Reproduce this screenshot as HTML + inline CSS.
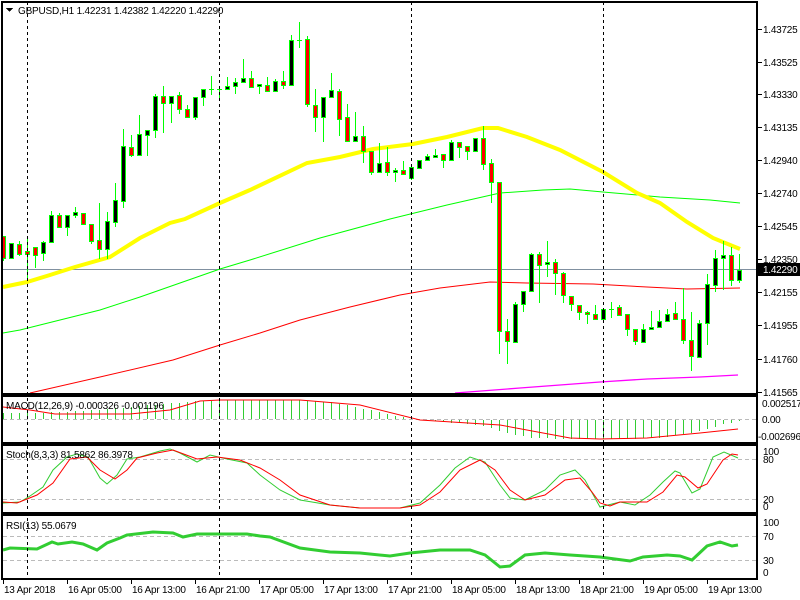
<!DOCTYPE html>
<html><head><meta charset="utf-8"><style>
html,body{margin:0;padding:0;background:#fff;}
svg{display:block;font-family:"Liberation Sans",sans-serif;font-size:10px;letter-spacing:-0.25px;}
.big{font-size:10px;letter-spacing:-0.2px;}
</style></head><body>
<svg id="s" width="800" height="600" xmlns="http://www.w3.org/2000/svg" shape-rendering="crispEdges">
<rect width="800" height="600" fill="#fff"/>
<g id="g"></g>
<text class="big" x="18" y="14" fill="#000">GBPUSD,H1  1.42231 1.42382 1.42220 1.42290</text>
<polygon points="6,8 13,8 9.5,12" fill="#000"/>
<text class="big" x="6" y="409" fill="#000">MACD(12,26,9) -0.000326 -0.001196</text>
<text class="big" x="6" y="458" fill="#000">Stoch(8,3,3) 81.5862 86.3978</text>
<text class="big" x="6" y="529" fill="#000">RSI(13) 55.0679</text>
</svg>
<script>
var g=document.getElementById('g'),h='';
function R(x,y,w,hh,c){h+='<rect x="'+x+'" y="'+y+'" width="'+w+'" height="'+hh+'" fill="'+c+'"/>';}
function L(pts,c,w,dash){h+='<polyline fill="none" stroke="'+c+'" stroke-width="'+w+'" '+(dash?'stroke-dasharray="'+dash+'" ':'')+'points="'+pts.map(function(p){return p.join(',')}).join(' ')+'" shape-rendering="auto"/>';}
function T(x,y,t,c){h+='<text x="'+x+'" y="'+y+'" fill="'+(c||'#000')+'">'+t+'</text>';}
L([[3,419.5],[757,419.5]],'#bbb',1,'4,3');
L([[3,459.5],[757,459.5]],'#bbb',1,'4,3');
L([[3,499.5],[757,499.5]],'#bbb',1,'4,3');
L([[3,536.5],[757,536.5]],'#bbb',1,'4,3');
L([[3,560.5],[757,560.5]],'#bbb',1,'4,3');
L([[3,269.5],[757,269.5]],'#8090a0',1);
L([[3,333],[20,330],[100,310],[140,297],[180,283],[220,269],[250,260],[320,238],[390,219],[447,205],[500,193],[543,190],[570,189],[603,192],[660,197],[710,200],[740,203]],'#00ff00',1);
L([[30,393],[100,377],[173,360],[220,345],[260,333],[300,320],[350,307],[400,295],[440,288],[490,282],[527,283],[593,284],[647,287],[687,289],[740,288]],'#ff0000',1);
L([[455,393],[520,388],[600,382],[647,379],[700,377],[738,375]],'#ff00ff',1.3);
L([[3,287],[27,282],[50,275],[75,267],[110,257],[140,238],[170,223],[185,219],[220,203],[250,190],[307,163],[340,157],[373,149],[413,144],[447,137],[483,128],[498,128],[527,137],[560,150],[603,172],[637,193],[660,203],[687,222],[713,238],[740,249]],'#ffff00',4);
var C=[[236,258,236,260],[258,243,243,258],[244,254,241,255],[251,254,237,277],[247,255,247,267],[253,242,241,260],[242,215,211,242],[215,227,213,227],[227,215,215,235],[215,212,207,217],[213,224,213,224],[224,241,224,243],[240,249,203,258],[249,221,212,258],[222,200,183,226],[201,146,129,207],[147,155,135,156],[155,134,115,155],[135,130,130,155],[130,96,94,137],[96,103,86,132],[103,96,96,122],[95,109,92,113],[109,117,105,117],[117,97,97,119],[97,89,89,105],[89,89,76,94],[89,89,89,100],[89,86,77,89],[86,82,78,93],[82,78,59,82],[78,87,71,87],[86,84,84,93],[85,91,77,91],[91,81,79,91],[81,85,71,88],[85,40,35,85],[40,40,22,47],[39,104,36,106],[105,117,89,131],[117,97,97,141],[97,90,73,97],[91,119,89,135],[117,141,104,141],[141,136,112,141],[136,151,126,162],[151,172,151,174],[172,163,143,172],[162,172,147,175],[172,170,168,181],[170,174,161,174],[178,167,167,179],[168,160,160,168],[160,156,154,160],[157,155,149,157],[154,160,154,167],[160,142,140,160],[142,147,142,157],[146,151,146,159],[151,138,138,151],[138,164,126,169],[163,182,159,202],[182,331,182,353],[331,341,319,363],[342,304,302,342],[304,291,291,311],[291,254,253,291],[254,265,252,302],[264,262,241,276],[262,273,259,294],[273,295,272,302],[296,304,296,310],[305,312,305,319],[312,314,311,323],[314,319,305,319],[319,309,309,319],[309,309,302,317],[307,315,305,315],[314,329,314,335],[329,341,329,344],[342,329,324,342],[329,327,311,329],[327,321,310,327],[321,314,309,321],[313,319,302,319],[319,340,288,343],[340,356,312,370],[357,323,320,357],[323,284,274,344],[285,258,250,291],[258,255,241,289],[255,280,247,285],[280,270,254,282]];
for(var i=0;i<C.length;i++){var c=C[i],x=3+8*i,o=c[0],cl=c[1],hi=c[2],lo=c[3];
 var t=Math.min(o,cl),b=Math.max(o,cl);
 R(x,hi,1,lo-hi+1,'#00ff00');
 if(b-t<2){R(x-2,t,5,Math.max(1,b-t+1),'#00ff00');}
 else{R(x-2,t,5,b-t+1,'#00ff00');R(x-1,t+1,3,b-t-1,cl<o?'#000':'#ff0000');}
}
var MP=[[3,413],[40,413],[80,411],[120,408],[160,404],[200,401],[230,400],[290,400],[330,402],[370,410],[400,417],[430,420],[480,424],[500,430],[530,437],[580,438],[620,438],[660,437],[700,430],[720,424],[740,420]];
function interp(P,x){for(var k=0;k<P.length-1;k++){if(x>=P[k][0]&&x<=P[k+1][0]){var f=(x-P[k][0])/(P[k+1][0]-P[k][0]);return P[k][1]+f*(P[k+1][1]-P[k][1]);}}return P[P.length-1][1];}
for(var i=0;i<93;i++){var x=3+8*i,y=Math.round(interp(MP,x));if(y<419)R(x,y,1,419-y,'#32cd32');else R(x,420,1,y-419,'#32cd32');}
L([[3,407],[30,410],[55,414],[130,414],[170,410],[200,401],[220,400],[300,400],[360,405],[420,420],[500,425],[570,438],[600,439],[647,438],[700,433],[738,429]],'#ff0000',1);
L([[3,503],[20,502],[30,496],[43,487],[53,470],[67,457],[77,454],[88,457],[100,478],[107,484],[117,475],[127,459],[140,457],[160,451],[170,449],[180,453],[197,462],[210,455],[227,459],[247,463],[260,475],[280,490],[300,500],[330,505],[360,508],[400,508],[420,503],[440,485],[455,468],[470,457],[485,462],[500,485],[510,498],[525,500],[545,490],[560,475],[575,470],[585,480],[600,507],[620,502],[635,505],[650,495],[663,482],[675,471],[680,473],[692,493],[700,489],[713,457],[724,452],[738,458]],'#32cd32',1);
L([[3,502],[17,503],[37,495],[53,483],[70,459],[87,457],[100,470],[115,479],[127,470],[137,458],[157,453],[173,450],[197,459],[217,457],[240,460],[260,468],[280,480],[300,495],[330,505],[360,508],[400,508],[420,505],[440,492],[460,470],[480,460],[495,470],[510,490],[525,500],[545,495],[565,480],[580,478],[592,492],[600,503],[610,506],[620,502],[647,502],[663,492],[677,475],[685,477],[698,488],[707,484],[723,460],[732,454],[738,455]],'#ff0000',1);
L([[3,550],[10,548],[37,549],[52,542],[58,544],[72,542],[83,544],[97,550],[107,543],[120,538],[127,535],[153,532],[173,533],[183,537],[197,534],[247,534],[260,536],[270,537],[300,548],[330,552],[360,553],[390,556],[410,553],[440,550],[470,550],[485,555],[500,567],[510,566],[525,555],[545,553],[570,555],[600,557],[630,561],[643,557],[667,555],[680,556],[692,560],[707,546],[720,542],[732,546],[738,545]],'#32cd32',3);
[27,219,411,603].forEach(function(x){L([[x+0.5,2],[x+0.5,579]],'#000',1,'3,3');});
R(0,0,800,2,'#fff');
h+='<g fill="none" stroke="#000" stroke-width="2">';
h+='<rect x="2" y="2" width="755" height="392"/><rect x="2" y="396" width="755" height="47"/><rect x="2" y="445" width="755" height="68"/><rect x="2" y="515" width="755" height="64"/></g>';
[['1.43725',29],['1.43525',62],['1.43330',94],['1.43135',127],['1.42940',160],['1.42740',193],['1.42545',226],['1.42350',259],['1.42155',292],['1.41955',325],['1.41760',359],['1.41565',392]].forEach(function(p){R(758,p[1],4,1,'#000');T(763,p[1]+4,p[0]);});
R(757,263,43,13,'#000');T(763,273,'1.42290','#fff');
T(762,407,'0.002517');T(762,423,'0.00');T(758,440,'-0.002696');
T(763,455,'100');T(763,463,'80');T(763,503,'20');T(763,510,'0');
T(763,526,'100');T(763,540,'70');T(763,564,'30');T(763,576,'0');
var TL=['13 Apr 2018','16 Apr 05:00','16 Apr 13:00','16 Apr 21:00','17 Apr 05:00','17 Apr 13:00','17 Apr 21:00','18 Apr 05:00','18 Apr 13:00','18 Apr 21:00','19 Apr 05:00','19 Apr 13:00'];
for(var i=0;i<TL.length;i++){var x=3+64*i;R(x,580,1,4,'#000');T(x+1,593,TL[i]);}
g.innerHTML=h;
</script>
</body></html>
